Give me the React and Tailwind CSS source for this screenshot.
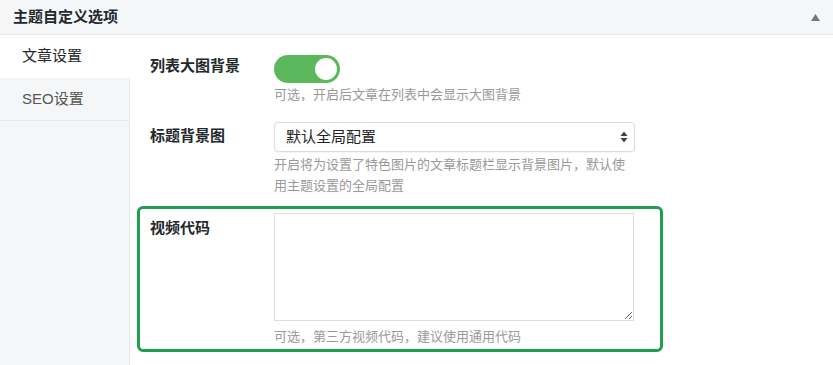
import React from 'react';

const font = { fontFamily: '"Liberation Sans", "Noto Sans CJK SC", sans-serif' };

function Toggle() {
  return (
    <div className="relative w-[66px] h-[28px] rounded-full bg-[#5cb85c]">
      <div className="absolute right-[1px] top-[1px] w-[26px] h-[26px] rounded-full bg-white border-2 border-[#5cb85c]" />
    </div>
  );
}

function FakeSelect() {
  return (
    <div className="w-[361px] h-[30px] rounded-[4px] border border-[#dcdcdc] bg-white flex items-center justify-between pl-[11px] pr-[6px] shadow-[0_1px_1px_rgba(0,0,0,0.04)]">
      <span className="text-[15px] text-[#222]">默认全局配置</span>
      <svg width="8" height="12" viewBox="0 0 8 12">
        <path d="M4 0.5 L7.5 5 L0.5 5 Z" fill="#444" />
        <path d="M4 11.5 L7.5 7 L0.5 7 Z" fill="#444" />
      </svg>
    </div>
  );
}

export default function App() {
  return (
    <div className="w-[833px] h-[365px] bg-white overflow-hidden flex flex-col" style={font}>
      <div className="h-[35px] shrink-0 bg-[#f5f6f7] border-b border-[#e8e8e8] flex items-center justify-between pl-[13px] pr-[13px]">
        <span className="text-[15px] font-bold text-[#23282d]">主题自定义选项</span>
        <svg width="9" height="7" viewBox="0 0 9 7">
          <path d="M4.5 0 L9 7 L0 7 Z" fill="#72777c" />
        </svg>
      </div>
      <div className="flex flex-1">
        <div className="w-[130px] shrink-0 bg-[#f5f6f7] border-r border-[#e8e8e8]">
          <div className="h-[43px] bg-white -mr-px flex items-center pl-[22px] text-[15px] text-[#23282d]">文章设置</div>
          <div className="h-[43px] border-b border-[#e6e6e6] flex items-center pl-[22px] text-[15px] text-[#555]">SEO设置</div>
        </div>
        <div className="flex-1 pl-[7px]">
          <div className="w-[526px] flex pl-[13px] pt-[20px]">
            <div className="w-[124px] shrink-0 pt-[1px] leading-[20px] text-[15px] font-bold text-[#23282d]">列表大图背景</div>
            <div>
              <Toggle />
              <div className="mt-[2px] text-[13px] leading-[20px] text-[#999]">可选，开启后文章在列表中会显示大图背景</div>
            </div>
          </div>
          <div className="w-[526px] flex pl-[13px] pt-[17px]">
            <div className="w-[124px] shrink-0 pt-[4px] leading-[20px] text-[15px] font-bold text-[#23282d]">标题背景图</div>
            <div className="w-[361px]">
              <FakeSelect />
              <div className="mt-[2px] text-[13px] leading-[21px] text-[#999]">开启将为设置了特色图片的文章标题栏显示背景图片，默认使用主题设置的全局配置</div>
            </div>
          </div>
          <div className="mt-[10px] w-[526px] h-[146px] rounded-[6px] border-[3px] border-[#1f9e4e] flex pl-[10px] pt-[4px]">
            <div className="w-[124px] shrink-0 pt-[5px] leading-[20px] text-[15px] font-bold text-[#23282d]">视频代码</div>
            <div>
              <textarea className="block w-[360px] h-[108px] border border-[#dddddd] bg-white outline-none" />
              <div className="mt-[6px] text-[13px] leading-[20px] text-[#999]">可选，第三方视频代码，建议使用通用代码</div>
            </div>
          </div>
        </div>
      </div>
    </div>
  );
}
